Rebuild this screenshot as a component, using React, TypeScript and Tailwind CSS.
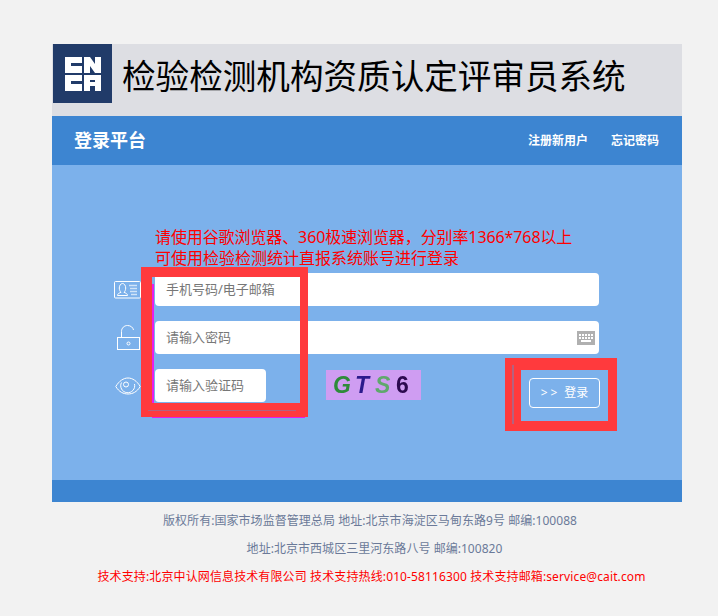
const fontStack = "font-['Noto_Sans','Noto_Sans_CJK_SC',sans-serif]";

function Logo() {
  return (
    <div className="ml-px flex h-[59px] w-[59px] shrink-0 items-center justify-center bg-[#213b69]">
      <svg width="36" height="34" viewBox="0 0 36 34" aria-hidden>
        <g fill="#fff">
          <path d="M0 0h17v6H6v3h11v7H0z" />
          <path d="M19 0h6l5 7V0h6v16h-6l-5-7v7h-6z" />
          <path d="M0 18h17v6H6v3h11v7H0z" />
          <path fillRule="evenodd" d="M19 18h17v16h-6v-5h-5v5h-6zM25 23v2h5v-2z" />
        </g>
      </svg>
    </div>
  );
}

function UserCardIcon() {
  return (
    <svg width="27" height="18" viewBox="0 0 27 18" fill="none" stroke="#fff" aria-hidden>
      <rect x="0.5" y="0.5" width="26" height="16.500" rx="1" />
      <path d="M3.500 14.500c0-2 2-2.500 3.500-3.200-1-1-1.700-2.300-1.700-4.300 0-2.300 1.300-4.500 3.200-4.500s3.200 2.200 3.200 4.500c0 2-.7 3.300-1.700 4.300 1.500.7 3.500 1.200 3.500 3.200z" />
      <path d="M15 4.500h8M16 7.500h7M16 10.500h7M17 13.500h6" opacity="0.65" strokeWidth="1.400" />
    </svg>
  );
}

function LockIcon() {
  return (
    <svg width="24" height="27" viewBox="0 0 24 27" fill="none" stroke="#fff" aria-hidden>
      <rect x="1.500" y="13.500" width="22" height="12" />
      <circle cx="12.500" cy="19.500" r="1.500" />
      <path d="M5.500 13V7.500c0-3.500 2.700-6 6-6s5.500 2 6 4.500" />
    </svg>
  );
}

function EyeIcon() {
  return (
    <svg width="26" height="18" viewBox="0 0 26 18" fill="none" stroke="#fff" aria-hidden>
      <path d="M0.800 9.500C4 4 8.500 1 13 1s9 3 12.200 8.500C22 15 17.500 17 13 17S4 15 0.800 9.500z" />
      <path d="M6.500 5.500a7 7 0 1 0 13 1.500" />
      <circle cx="11" cy="7.500" r="2.500" />
    </svg>
  );
}

function KeyboardIcon() {
  return (
    <svg width="18" height="14" viewBox="0 0 18 14" aria-hidden>
      <rect width="18" height="14" fill="#b0b0b0" />
      <path
        d="M2 3h2v2H2zM5 3h2v2H5zM8 3h2v2H8zM11 3h2v2h-2zM14 3h2v2h-2zM2 6h2v2H2zM5 6h2v2H5zM8 6h2v2H8zM11 6h2v2h-2zM14 6h2v2h-2zM4 9h10v2H4z"
        fill="#fff"
      />
    </svg>
  );
}

function Captcha() {
  return (
    <div className="mt-px ml-[60px] flex h-[30px] w-[95px] items-center bg-[#cf9df2] pl-[7px] font-['Liberation_Sans',sans-serif] text-[23px] leading-none font-bold italic blur-[0.4px]">
      <span className="w-[22px] text-[#2e8b3a]">G</span>
      <span className="w-[20px] text-[#2b1a8c]">T</span>
      <span className="w-[21px] text-[#5fa86c]">S</span>
      <span className="text-[#2c0a4f] not-italic">6</span>
    </div>
  );
}

function Row({
  icon,
  placeholder,
  children,
}: {
  icon: React.ReactNode;
  placeholder: string;
  children?: React.ReactNode;
}) {
  return (
    <div className="relative flex h-[33px] w-[444px] items-center rounded-[4px] bg-white pl-[11px] text-[13px] text-[#777]">
      <div className="absolute left-[-41px] flex w-[27px] justify-center">{icon}</div>
      {placeholder}
      {children}
    </div>
  );
}

export default function App() {
  return (
    <div className={`relative h-[616px] w-[718px] overflow-hidden bg-[#f2f2f2] pt-[44px] ${fontStack}`}>
      <div className="ml-[52px] w-[630px]">
        <div className="flex h-[72px] bg-[#dddee3]">
          <Logo />
          <h1 className="mt-[11px] ml-[10px] text-[33.600px] leading-[42px] font-normal text-black">
            检验检测机构资质认定评审员系统
          </h1>
        </div>
        <div className="flex h-[49px] items-center justify-between bg-[#3d85d1] pr-[23px] pl-[22px] text-white">
          <span className="text-[18px] font-bold">登录平台</span>
          <div className="flex gap-[23px] text-[12px] font-bold">
            <span>注册新用户</span>
            <span>忘记密码</span>
          </div>
        </div>
        <div className="h-[315px] bg-[#7cb1eb] pt-[62px] pl-[103px]">
          <p className="text-[16px] leading-[21px] whitespace-nowrap text-[#ff0000]">
            <span className="tracking-[-0.1px]">请使用谷歌浏览器、360极速浏览器，分别率1366*768以上</span>
            <br />
            可使用检验检测统计直报系统账号进行登录
          </p>
          <div className="mt-[4px] flex flex-col gap-[15px]">
            <Row icon={<UserCardIcon />} placeholder="手机号码/电子邮箱" />
            <Row icon={<LockIcon />} placeholder="请输入密码">
              <div className="absolute top-[10px] right-[4px]">
                <KeyboardIcon />
              </div>
            </Row>
            <div className="flex items-start">
              <div className="relative flex h-[33px] w-[111px] items-center rounded-[4px] bg-white pl-[11px] text-[13px] text-[#777]">
                <div className="absolute left-[-41px] flex w-[27px] justify-center">
                  <EyeIcon />
                </div>
                请输入验证码
              </div>
              <Captcha />
              <button className="mt-[9px] ml-[108px] flex h-[30px] w-[71px] items-center justify-center gap-[4px] rounded-[4px] border border-white text-[12px] text-white">
                <span className="tracking-[3px]">&gt;&gt;</span>
                <span>登录</span>
              </button>
            </div>
          </div>
        </div>
        <div className="h-[22px] bg-[#3d85d1]" />
        <div className="text-center text-[12px] leading-[28px] whitespace-nowrap text-[#6b7a99]">
          <p className="mt-[5px] pl-[6px] tracking-[0.05px]">
            版权所有:国家市场监督管理总局 地址:北京市海淀区马甸东路9号 邮编:100088
          </p>
          <p className="pl-[15px] tracking-[0.04px]">地址:北京市西城区三里河东路八号 邮编:100820</p>
          <p className="pl-[9px] tracking-[0.12px] text-[#ff0000]">
            技术支持:北京中认网信息技术有限公司 技术支持热线:010-58116300 技术支持邮箱:service@cait.com
          </p>
        </div>
      </div>
      {/* red markup drawn over the screenshot */}
      <div className="absolute top-[284px] left-[152px] h-[134px] w-[153px] border-b-2 border-l-2 border-[#e81ee8]" />
      <div className="absolute top-[267px] left-[141px] h-[150px] w-[167px] border-t-[10px] border-r-[8px] border-b-[14px] border-l-[11px] border-[#ff3a3d]" />
      <div className="absolute top-[410px] left-[148px] h-px w-[148px] bg-[#b5617f]" />
      <div className="absolute top-[358px] left-[505px] h-[73px] w-[112px] border-t-[12px] border-r-[9px] border-b-[10px] border-l-[16px] border-[#ff3a3d]" />
      <div className="absolute top-[365px] left-[512px] h-[59px] w-[2px] bg-[#b5617f]" />
    </div>
  );
}
